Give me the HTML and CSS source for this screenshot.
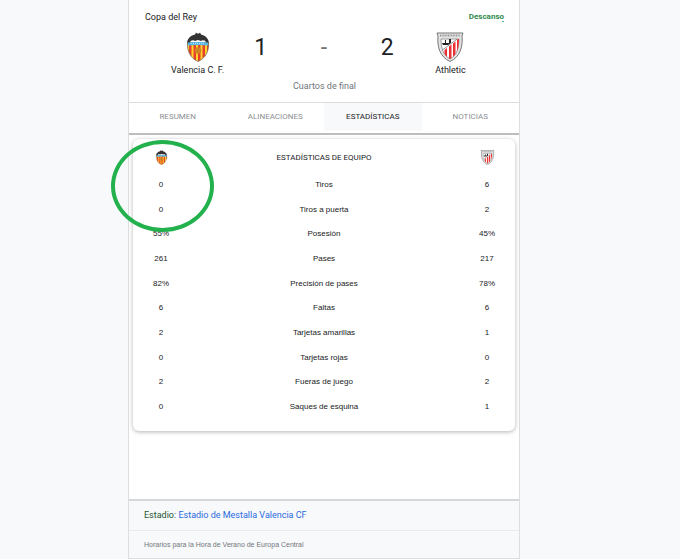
FILE: index.html
```html
<!DOCTYPE html>
<html lang="es">
<head>
  <meta charset="UTF-8" />
  <meta name="viewport" content="width=device-width, initial-scale=1" />
  <title>Valencia C. F. - Athletic</title>
  <link rel="stylesheet" href="styles.css">
</head>
<body>

<svg class="sprite" aria-hidden="true">
  <symbol id="valencia" viewBox="0 0 24 30">
    <clipPath id="vShield"><path d="M1.500 12H22.500C23 19 19 26 12 29.500C5 26 1 19 1.500 12Z"/></clipPath>
    <path d="M1 11C1.500 6 5 3.500 9 2.500L10 .5L11 1.500H13L14 .5L15 2.500C19 3.500 22.500 6 23 11L21 12H3Z" fill="#333"/>
    <path d="M4 10.500C4.500 8.500 7 7.500 9 9L12 8L15 9C17 7.500 19.500 8.500 20 10.500Z" fill="#fff"/>
    <g clip-path="url(#vShield)">
      <path d="M0 10H24V30H0Z" fill="#ffd52b"/>
      <path d="M3 10H5.500V30H3ZM7.500 10H10V30H7.500ZM12 10H14.500V30H12ZM16.500 10H19V30H16.500ZM21 10H23V30H21Z" fill="#e8402a"/>
    </g>
    <path d="M1.500 10.500Q12 9.500 22.500 10.500V13.500Q12 12.500 1.500 13.500Z" fill="#55b9e6"/>
    <path d="M5 11.500H19" stroke="#b5e2f8" stroke-dasharray="1 1"/>
    <circle cx="12" cy="18.500" r="3.300" fill="#cf8428"/>
    <path d="M1.500 10.500C1 19 4 26 12 29.500C20 26 23 19 22.500 10.500" fill="none" stroke="#7c664d" stroke-width=".8"/>
  </symbol>
  <symbol id="athletic" viewBox="0 0 28 30">
    <clipPath id="aShield"><path d="M5 7H23C23 16 21 23 14 27C7 23 5 16 5 7Z"/></clipPath>
    <path d="M1 1H27L26 4C27 15 24 25 14 29.500C4 25 1 15 2 4Z" fill="#e4e4e4" stroke="#777"/>
    <path d="M4 3.500H24" stroke="#999" stroke-width="2" stroke-dasharray="1 .6"/>
    <path d="M5 7H23C23 16 21 23 14 27C7 23 5 16 5 7Z" fill="#fff" stroke="#888" stroke-width=".8"/>
    <g clip-path="url(#aShield)">
      <path d="M8.500 18L11 16V30H8.500ZM13 14.500L15.500 12.500V30H13ZM17 11.500L19.500 9.500V30H17ZM21 8L24 5V30H21Z" fill="#ec2f32"/>
      <path d="M5 19L24 5" stroke="#777" stroke-width=".8"/>
      <path d="M6 11H9V8H10V11H13V6H15V11L12 13H7Z" fill="#222"/>
    </g>
  </symbol>
</svg>

<main class="match">
  <header class="match-header">
    <div class="match-top">
      <span class="league">Copa del Rey</span>
      <span class="status">Descanso</span>
    </div>
    <div class="scoreboard">
      <div class="team">
        <svg class="crest"><use href="#valencia"/></svg>
        <span>Valencia C. F.</span>
      </div>
      <div class="score">1</div>
      <div class="score dash">-</div>
      <div class="score">2</div>
      <div class="team">
        <svg class="crest"><use href="#athletic"/></svg>
        <span>Athletic</span>
      </div>
    </div>
    <div class="round">Cuartos de final</div>
  </header>

  <nav class="tabs">
    <a href="#resumen">RESUMEN</a>
    <a href="#alineaciones">ALINEACIONES</a>
    <a href="#estadisticas" class="active" aria-current="page">ESTADÍSTICAS</a>
    <a href="#noticias">NOTICIAS</a>
  </nav>

  <section class="stats" id="estadisticas">
    <div class="card">
      <table>
        <thead>
          <tr>
            <th><svg class="crest-small" role="img" aria-label="Valencia C. F."><use href="#valencia"/></svg></th>
            <th>ESTADÍSTICAS DE EQUIPO</th>
            <th><svg class="crest-small" role="img" aria-label="Athletic"><use href="#athletic"/></svg></th>
          </tr>
        </thead>
        <tbody>
          <tr><td>0</td><th>Tiros</th><td>6</td></tr>
          <tr><td>0</td><th>Tiros a puerta</th><td>2</td></tr>
          <tr><td>55%</td><th>Posesión</th><td>45%</td></tr>
          <tr><td>261</td><th>Pases</th><td>217</td></tr>
          <tr><td>82%</td><th>Precisión de pases</th><td>78%</td></tr>
          <tr><td>6</td><th>Faltas</th><td>6</td></tr>
          <tr><td>2</td><th>Tarjetas amarillas</th><td>1</td></tr>
          <tr><td>0</td><th>Tarjetas rojas</th><td>0</td></tr>
          <tr><td>2</td><th>Fueras de juego</th><td>2</td></tr>
          <tr><td>0</td><th>Saques de esquina</th><td>1</td></tr>
        </tbody>
      </table>
      <div class="highlight"></div>
    </div>
  </section>

  <footer>
    <p class="stadium">Estadio: <a href="#estadio">Estadio de Mestalla Valencia CF</a></p>
    <p class="timezone">Horarios para la Hora de Verano de Europa Central</p>
  </footer>
</main>

</body>
</html>
```
FILE: styles.css
```css
* { box-sizing: border-box; }
body {
  font-family: "Liberation Sans", Arial, sans-serif;
  font-size: 8px;
  color: #202124;
  background: #f8f9fb;
  margin: 0;
}
.sprite { position: absolute; width: 0; height: 0; }

.match {
  margin: 0 160px 0 128px;
  background: #fff;
  border: 1px solid #dcdee0;
  border-top: none;
}

/* marcador */
.match-header {
  padding: 11px 15px 10px 16px;
  border-bottom: 1px solid #dadce0;
  font-family: Roboto, sans-serif;
  font-size: 9px;
  line-height: 12px;
}
.match-top {
  display: flex;
  justify-content: space-between;
}
.status {
  position: relative;
  font-size: 8px;
  font-weight: bold;
  color: #2f8a4c;
}
.status::after {
  content: "";
  position: absolute;
  right: 0;
  bottom: 1px;
  width: 2px;
  height: 1px;
  background: #4db6a0;
}
.scoreboard {
  display: grid;
  grid-template-columns: repeat(5, 1fr);
  padding: 9px 22px 0 21px;
}
.team {
  display: flex;
  flex-direction: column;
  align-items: center;
  gap: 2px;
  white-space: nowrap;
}
.crest { width: 28px; height: 30px; }
.score {
  font-size: 23px;
  line-height: 32px;
  text-align: center;
}
.dash { color: #70757a; }
.round {
  margin-top: 4px;
  text-align: center;
  color: #70757a;
}

/* pestañas */
.tabs {
  display: grid;
  grid-template-columns: repeat(4, 1fr);
  padding-bottom: 2px;
  border-bottom: 2px solid #bdbdbd;
}
.tabs a {
  font-family: Roboto, sans-serif;
  font-size: 8px;
  line-height: 28px;
  text-align: center;
  text-decoration: none;
  color: #8c8f93;
}
.tabs .active {
  background: #f8f9fb;
  color: #202124;
}

/* estadísticas */
.stats { padding: 4px 4px 68px; }
.card {
  position: relative;
  padding: 3px 0 12px;
  border-radius: 6px;
  box-shadow: 0 1px 4px rgb(0 0 0 / 0.3);
}
table {
  width: 100%;
  height: 277px;
  table-layout: fixed;
  border-collapse: collapse;
}
thead tr { height: 30px; }
th, td {
  padding: 0;
  text-align: center;
  font-weight: normal;
}
thead th { font-family: Roboto, sans-serif; }
thead th:first-child, thead th:last-child { width: 56px; }
.crest-small {
  display: block;
  width: 15px;
  height: 15px;
  margin: 0 auto;
}
.highlight {
  position: absolute;
  top: 1px;
  left: -22px;
  width: 103px;
  height: 92px;
  border: 4px solid #22b14c;
  border-radius: 50%;
}

/* pie */
footer {
  background: #f8f9fb;
  border-top: 2px solid #d5d7d9;
}
footer p { margin: 0; padding: 0 15px; }
.stadium {
  font-family: Roboto, sans-serif;
  font-size: 9px;
  line-height: 29px;
  color: #1e5631;
  border-bottom: 1px solid #e8eaed;
}
.stadium a { color: #2a6be0; text-decoration: none; }
.timezone {
  font-size: 7px;
  line-height: 27px;
  color: #70757a;
}
```
